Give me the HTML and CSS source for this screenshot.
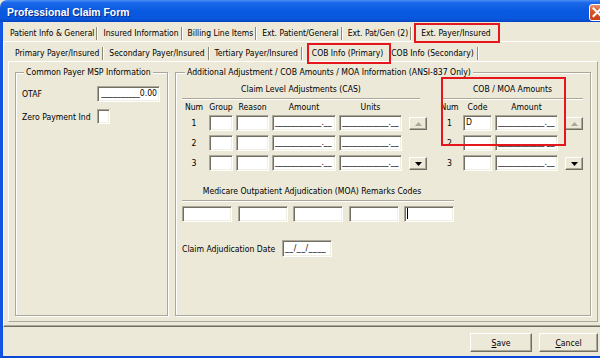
FILE: index.html
```html
<!DOCTYPE html>
<html lang="en">
<head>
    <meta charset="UTF-8">
    <title>Professional Claim Form</title>
    <link rel="stylesheet" href="styles.css">
</head>
<body>
    <div class="window">
        <div class="titlebar">
            <span class="title">Professional Claim Form</span>
            <span class="close">
                <svg width="17" height="17" viewBox="0 0 17 17"><path d="M4.5 4.5 L12 12 M12 4.5 L4.5 12" stroke="#fff" stroke-width="2" stroke-linecap="square"/></svg>
            </span>
        </div>
        <div class="client">
            <div class="tabs top-tabs">
                <div class="tab">Patient Info &amp; General</div>
                <div class="tab">Insured Information</div>
                <div class="tab">Billing Line Items</div>
                <div class="tab">Ext. Patient/General</div>
                <div class="tab">Ext. Pat/Gen (2)</div>
                <div class="tab active">Ext. Payer/Insured</div>
            </div>
            <div class="panel outer">
                <div class="tabs sub-tabs">
                    <div class="tab">Primary Payer/Insured</div>
                    <div class="tab">Secondary Payer/Insured</div>
                    <div class="tab">Tertiary Payer/Insured</div>
                    <div class="tab active">COB Info (Primary)</div>
                    <div class="tab">COB Info (Secondary)</div>
                </div>
                <div class="panel inner">
                    <div class="group msp">
                        <div class="legend">Common Payer MSP Information</div>
                        <div class="msp-fields">
                            <span class="label">OTAF</span>
                            <div class="field right">__________0.00</div>
                            <span class="label">Zero Payment Ind</span>
                            <div class="field check"></div>
                        </div>
                    </div>

                    <div class="group adj">
                        <div class="legend">Additional Adjustment / COB Amounts / MOA Information (ANSI-837 Only)</div>
                        <div class="adj-top">
                            <div class="cas">
                                <div class="section-head cas-head">Claim Level Adjustments (CAS)</div>
                                <div class="table cas-table">
                                    <span class="colhead">Num</span>
                                    <span class="colhead">Group</span>
                                    <span class="colhead">Reason</span>
                                    <span class="colhead">Amount</span>
                                    <span class="colhead">Units</span>
                                    <span></span>

                                    <span class="num">1</span>
                                    <div class="field"></div>
                                    <div class="field"></div>
                                    <div class="field">____________.__</div>
                                    <div class="field">____________.__</div>
                                    <div class="spin"><svg width="7" height="4" viewBox="0 0 7 4"><polygon points="0,4 3.5,0 7,4" fill="#aca899"/></svg></div>

                                    <span class="num">2</span>
                                    <div class="field"></div>
                                    <div class="field"></div>
                                    <div class="field">____________.__</div>
                                    <div class="field">____________.__</div>
                                    <span></span>

                                    <span class="num">3</span>
                                    <div class="field"></div>
                                    <div class="field"></div>
                                    <div class="field">____________.__</div>
                                    <div class="field">____________.__</div>
                                    <div class="spin"><svg width="7" height="4" viewBox="0 0 7 4"><polygon points="0,0 7,0 3.5,4" fill="#000"/></svg></div>
                                </div>
                            </div>

                            <div class="cob">
                                <div class="section-head cob-head">COB / MOA Amounts</div>
                                <div class="table cob-table">
                                    <span class="colhead">Num</span>
                                    <span class="colhead">Code</span>
                                    <span class="colhead">Amount</span>
                                    <span></span>

                                    <span class="num">1</span>
                                    <div class="field">D</div>
                                    <div class="field">____________.__</div>
                                    <div class="spin"><svg width="7" height="4" viewBox="0 0 7 4"><polygon points="0,4 3.5,0 7,4" fill="#aca899"/></svg></div>

                                    <span class="num">2</span>
                                    <div class="field"></div>
                                    <div class="field">____________.__</div>
                                    <span></span>

                                    <span class="num">3</span>
                                    <div class="field"></div>
                                    <div class="field">____________.__</div>
                                    <div class="spin"><svg width="7" height="4" viewBox="0 0 7 4"><polygon points="0,0 7,0 3.5,4" fill="#000"/></svg></div>
                                </div>
                            </div>
                        </div>

                        <div class="moa">
                            <div class="section-head moa-head"><span>Medicare Outpatient Adjudication (MOA) Remarks Codes</span></div>
                            <div class="moa-codes">
                                <div class="field"></div>
                                <div class="field"></div>
                                <div class="field"></div>
                                <div class="field"></div>
                                <div class="field"><span class="caret"></span></div>
                            </div>
                        </div>

                        <div class="date-row">
                            <span class="label date-label">Claim Adjudication Date</span>
                            <div class="field date">__/__/____</div>
                        </div>
                    </div>
                </div>
            </div>
            <div class="buttonbar">
                <button class="btn save"><u>S</u>ave</button>
                <button class="btn cancel"><u>C</u>ancel</button>
            </div>
        </div>

        <!-- red highlight boxes drawn on top of the screenshot -->
        <div class="callout callout-tab"></div>
        <div class="callout callout-subtab"></div>
        <div class="callout callout-cob"></div>
    </div>
</body>
</html>
```

FILE: styles.css
```css
* {
    box-sizing: border-box;
}
body {
    margin: 0;
    width: 600px;
    height: 358px;
    overflow: hidden;
    background-color: #ece9d8;
    color: #000;
    font-family: "DejaVu Sans Condensed", "Liberation Sans", sans-serif;
    font-size: 8.6px;
}
.window {
    position: relative;
    width: 606px;
    height: 358px;
}
.titlebar {
    height: 22px;
    display: flex;
    align-items: center;
    padding: 2px 0 0 7px;
    border-radius: 7px 7px 0 0;
    background: linear-gradient(to bottom, #4a90f5 0%, #1c6aea 12%, #0a5be2 45%, #0857dc 85%, #0744c2 100%);
}
.title {
    color: #fff;
    font-family: "Liberation Sans", sans-serif;
    font-weight: bold;
    font-size: 10.4px;
    text-shadow: 1px 1px 0 #0b2a8c;
}
.close {
    margin-left: auto;
    width: 17px;
    height: 17px;
    margin-top: 1px;
    border: 1px solid #fff;
    border-radius: 3px;
    background: linear-gradient(to bottom, #e9906f 0%, #d9572d 40%, #c8401a 100%);
    display: flex;
}
.close svg {
    margin: -1px;
}
.client {
    height: 336px;
    border-left: 3px solid #1254e3;
    border-bottom: 2px solid #0a48d6;
    display: flex;
    flex-direction: column;
}

/* tab strips */
.tabs {
    display: flex;
    height: 19px;
    padding-top: 3px;
    align-items: center;
    font-size: 8.5px;
}
.top-tabs {
    padding-left: 2px;
}
.sub-tabs {
    padding-left: 2px;
}
.tab {
    display: flex;
    align-items: center;
    padding-left: 5px;
    white-space: nowrap;
}
.tab::after {
    content: "";
    width: 1px;
    height: 13px;
    margin-left: 2px;
    background: #8c897a;
    border-right: 1px solid #fff;
    box-sizing: content-box;
}
.sub-tabs .tab::after {
    margin-left: 3px;
}
.tab.active {
    padding-left: 9px;
}
.tab.active::after {
    display: none;
}
.sub-tabs .tab.active {
    padding-left: 9px;
    padding-right: 3px;
}

/* panels */
.panel {
    border-top: 1px solid #fff;
    border-left: 1px solid #fff;
    border-right: 1px solid #716f64;
    border-bottom: 1px solid #716f64;
}
.outer {
    height: 286px;
    margin-right: 3px;
    padding: 0 4px 4px 4px;
    box-shadow: inset -1px -1px 0 #aca899;
}
.inner {
    height: 261px;
    display: flex;
    gap: 7px;
    padding: 10px 6px 0 6px;
    border-right-color: #aca899;
    border-bottom-color: #aca899;
}
.group {
    height: 244px;
    border: 1px solid #aca899;
    box-shadow: inset 1px 1px 0 #fff, 1px 1px 0 #fff;
}
.msp {
    width: 153px;
    padding-left: 6px;
}
.adj {
    width: 416px;
    padding-left: 6px;
}
.legend {
    width: fit-content;
    margin: -6px 0 0 2px;
    padding: 0 2px;
    line-height: 11px;
    background-color: #ece9d8;
    white-space: nowrap;
}
.adj .legend {
    margin-left: 3px;
}

/* fields */
.field {
    height: 16px;
    padding: 0 2px;
    line-height: 13px;
    white-space: nowrap;
    overflow: hidden;
    background-color: #fff;
    border: 1px solid;
    border-color: #aca899 #fff #fff #aca899;
    box-shadow: inset 1px 1px 0 #716f64, inset -1px -1px 0 #f1efe2;
}
.field.right {
    text-align: right;
}
.msp-fields {
    display: grid;
    grid-template-columns: 75px 63px;
    grid-template-rows: 16px 15px;
    row-gap: 7px;
    margin-top: 8px;
    align-items: center;
}
.field.check {
    width: 13px;
    height: 15px;
}

/* adjustments */
.adj-top {
    display: flex;
    gap: 12px;
    margin-top: 6px;
}
.cas {
    width: 245px;
}
.cob {
    width: 144px;
}
.section-head {
    line-height: 11px;
    text-align: center;
    padding-bottom: 3px;
    border-bottom: 1px solid #aca899;
    box-shadow: 0 1px 0 #fff;
    white-space: nowrap;
}
.cas-head {
    margin-right: 7px;
}
.cob-head {
    margin-left: 3px;
}
.table {
    display: grid;
    grid-template-rows: 13px 20px 20px 16px;
    column-gap: 3px;
    margin-top: 3px;
}
.cas-table {
    grid-template-columns: 24px 24px 33px 64px 63px 22px;
}
.cob-table {
    grid-template-columns: 21px 29px 63px 22px;
}
.colhead {
    line-height: 11px;
    text-align: center;
    white-space: nowrap;
}
.num {
    height: 16px;
    line-height: 16px;
    text-align: center;
}
.spin {
    width: 18px;
    height: 13px;
    justify-self: end;
    margin-top: 2px;
    display: flex;
    align-items: center;
    justify-content: center;
    border: 1px solid;
    border-color: #fff #716f64 #716f64 #fff;
    box-shadow: inset -1px -1px 0 #aca899;
}

.moa {
    width: 272px;
    margin-top: 15px;
}
.moa-head span {
    padding-right: 12px;
}
.moa-codes {
    display: grid;
    grid-template-columns: repeat(5, 50px);
    column-gap: 5.5px;
    margin-top: 5px;
}
.caret {
    display: inline-block;
    width: 1px;
    height: 11px;
    margin-top: 1px;
    background: #000;
    vertical-align: top;
}
.date-row {
    display: flex;
    align-items: center;
    margin-top: 18px;
}
.date-label {
    width: 100px;
}
.field.date {
    width: 50px;
    height: 17px;
    line-height: 14px;
    letter-spacing: 0.5px;
}

/* bottom buttons */
.buttonbar {
    flex: 1;
    display: flex;
    justify-content: flex-end;
    align-items: flex-start;
    gap: 7px;
    padding: 6px 8px 0 0;
}
.btn {
    height: 19px;
    padding: 0;
    font: inherit;
    color: #000;
    background-color: #ece9d8;
    border: 1px solid;
    border-color: #fff #716f64 #716f64 #fff;
    box-shadow: inset -1px -1px 0 #aca899;
}
.save {
    width: 62px;
}
.cancel {
    width: 59px;
}

/* annotation boxes */
.callout {
    position: absolute;
    border: 2px solid #e5161c;
}
.callout-tab {
    left: 414px;
    top: 23px;
    width: 86px;
    height: 20px;
}
.callout-subtab {
    left: 307px;
    top: 43px;
    width: 84px;
    height: 21px;
}
.callout-cob {
    left: 441px;
    top: 77px;
    width: 125px;
    height: 69px;
}
```
